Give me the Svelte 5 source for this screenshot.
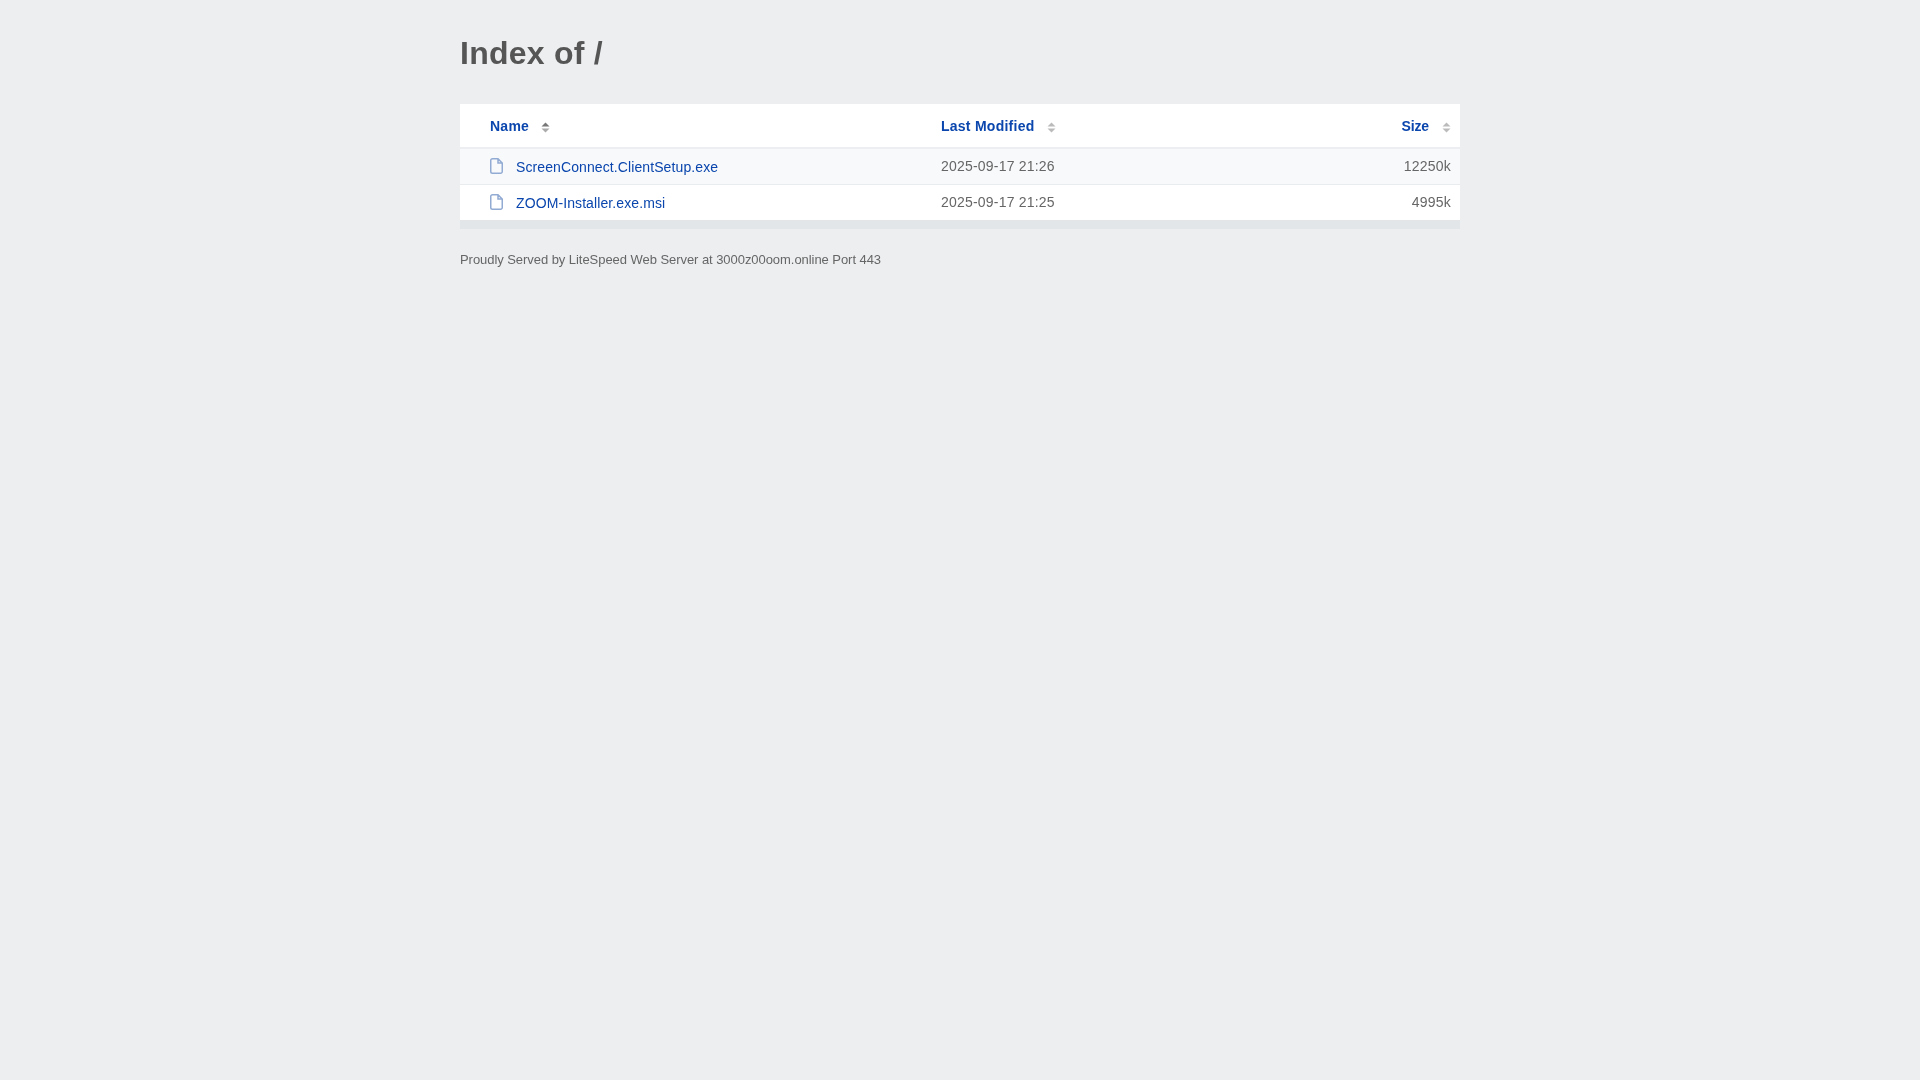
<script>
  const files = [
    { name: 'ScreenConnect.ClientSetup.exe', modified: '2025-09-17 21:26', size: '12250k' },
    { name: 'ZOOM-Installer.exe.msi', modified: '2025-09-17 21:25', size: '4995k' }
  ];
</script>

{#snippet sortArrows(active)}
  <svg class="sort" width="9" height="11" viewBox="0 0 9 11">
    <path d="M4.5 0.5 L8.5 4.5 H0.5 Z" fill={active ? '#777' : '#bbb'} />
    <path d="M0.5 6.5 H8.5 L4.5 10.5 Z" fill={active ? '#aaa' : '#bbb'} />
  </svg>
{/snippet}

<div class="wrapper">
  <h1>Index of /</h1>

  <div class="listing">
    <table>
      <thead>
        <tr>
          <th class="name"><a href="#name">Name</a>{@render sortArrows(true)}</th>
          <th class="modified"><a href="#modified">Last Modified</a>{@render sortArrows(false)}</th>
          <th class="size"><a href="#size">Size</a>{@render sortArrows(false)}</th>
        </tr>
      </thead>
      <tbody>
        {#each files as file}
          <tr>
            <td class="name">
              <div class="file">
                <svg class="icon" width="13" height="16" viewBox="0 0 13 16">
                  <path d="M2.5 0.75 H8 L12.25 5 V13.5 A1.75 1.75 0 0 1 10.5 15.25 H2.5 A1.75 1.75 0 0 1 0.75 13.5 V2.5 A1.75 1.75 0 0 1 2.5 0.75 Z M8 0.75 V5 H12.25" fill="none" stroke="#92abd3" stroke-width="1.5" />
                </svg>
                <a href="#file">{file.name}</a>
              </div>
            </td>
            <td class="modified">{file.modified}</td>
            <td class="size">{file.size}</td>
          </tr>
        {/each}
      </tbody>
    </table>
  </div>

  <address>Proudly Served by LiteSpeed Web Server at 3000z00oom.online Port 443</address>
</div>

<style>
  :global(body) {
    background: #eceef0;
    font-family: "Liberation Sans", Arial, sans-serif;
    color: #666;
  }

  .wrapper {
    width: 1000px;
    margin: 0 auto;
    will-change: transform;
  }

  h1 {
    margin: 0;
    padding-top: 34px;
    height: 104px;
    box-sizing: border-box;
    font-size: 32px;
    line-height: 38px;
    font-weight: 700;
    letter-spacing: 0.24px;
    color: #555;
  }

  .listing {
    background: #e3e6e9;
    padding-bottom: 9px;
  }

  table {
    width: 100%;
    border-collapse: separate;
    border-spacing: 0;
    table-layout: fixed;
    background: #fff;
    font-size: 14px;
  }

  a {
    color: #0a46ad;
    text-decoration: none;
  }

  th {
    height: 45px;
    padding: 0 9px 0 0;
    border-bottom: 2px solid #eceef1;
    text-align: left;
    font-weight: 700;
    letter-spacing: 0.25px;
    box-sizing: border-box;
  }

  td {
    height: 36px;
    padding: 0 9px 0 0;
    box-sizing: border-box;
    border-bottom: 1px solid #e9ecef;
    letter-spacing: 0.2px;
  }

  td.modified,
  td.size {
    padding-bottom: 1px;
  }

  tbody tr:nth-child(odd) {
    background: #f8f9fb;
  }

  tbody tr:last-child td {
    height: 35px;
    border-bottom: 0;
  }

  .name {
    width: 481px;
    padding-left: 30px;
    box-sizing: border-box;
  }

  .file {
    display: flex;
    align-items: center;
    gap: 13px;
    letter-spacing: 0.1px;
  }

  .file a {
    padding-top: 1px;
  }

  .modified {
    width: 310px;
  }

  .size {
    text-align: right;
  }

  th.size {
    letter-spacing: -0.15px;
  }

  .sort {
    margin-left: 13px;
    vertical-align: -2px;
  }

  th.name .sort {
    margin-left: 12px;
  }

  .icon {
    flex-shrink: 0;
    margin-top: -1px;
  }

  address {
    margin-top: 23px;
    font-size: 13px;
    line-height: 15px;
    font-style: normal;
    letter-spacing: -0.054px;
  }
</style>
